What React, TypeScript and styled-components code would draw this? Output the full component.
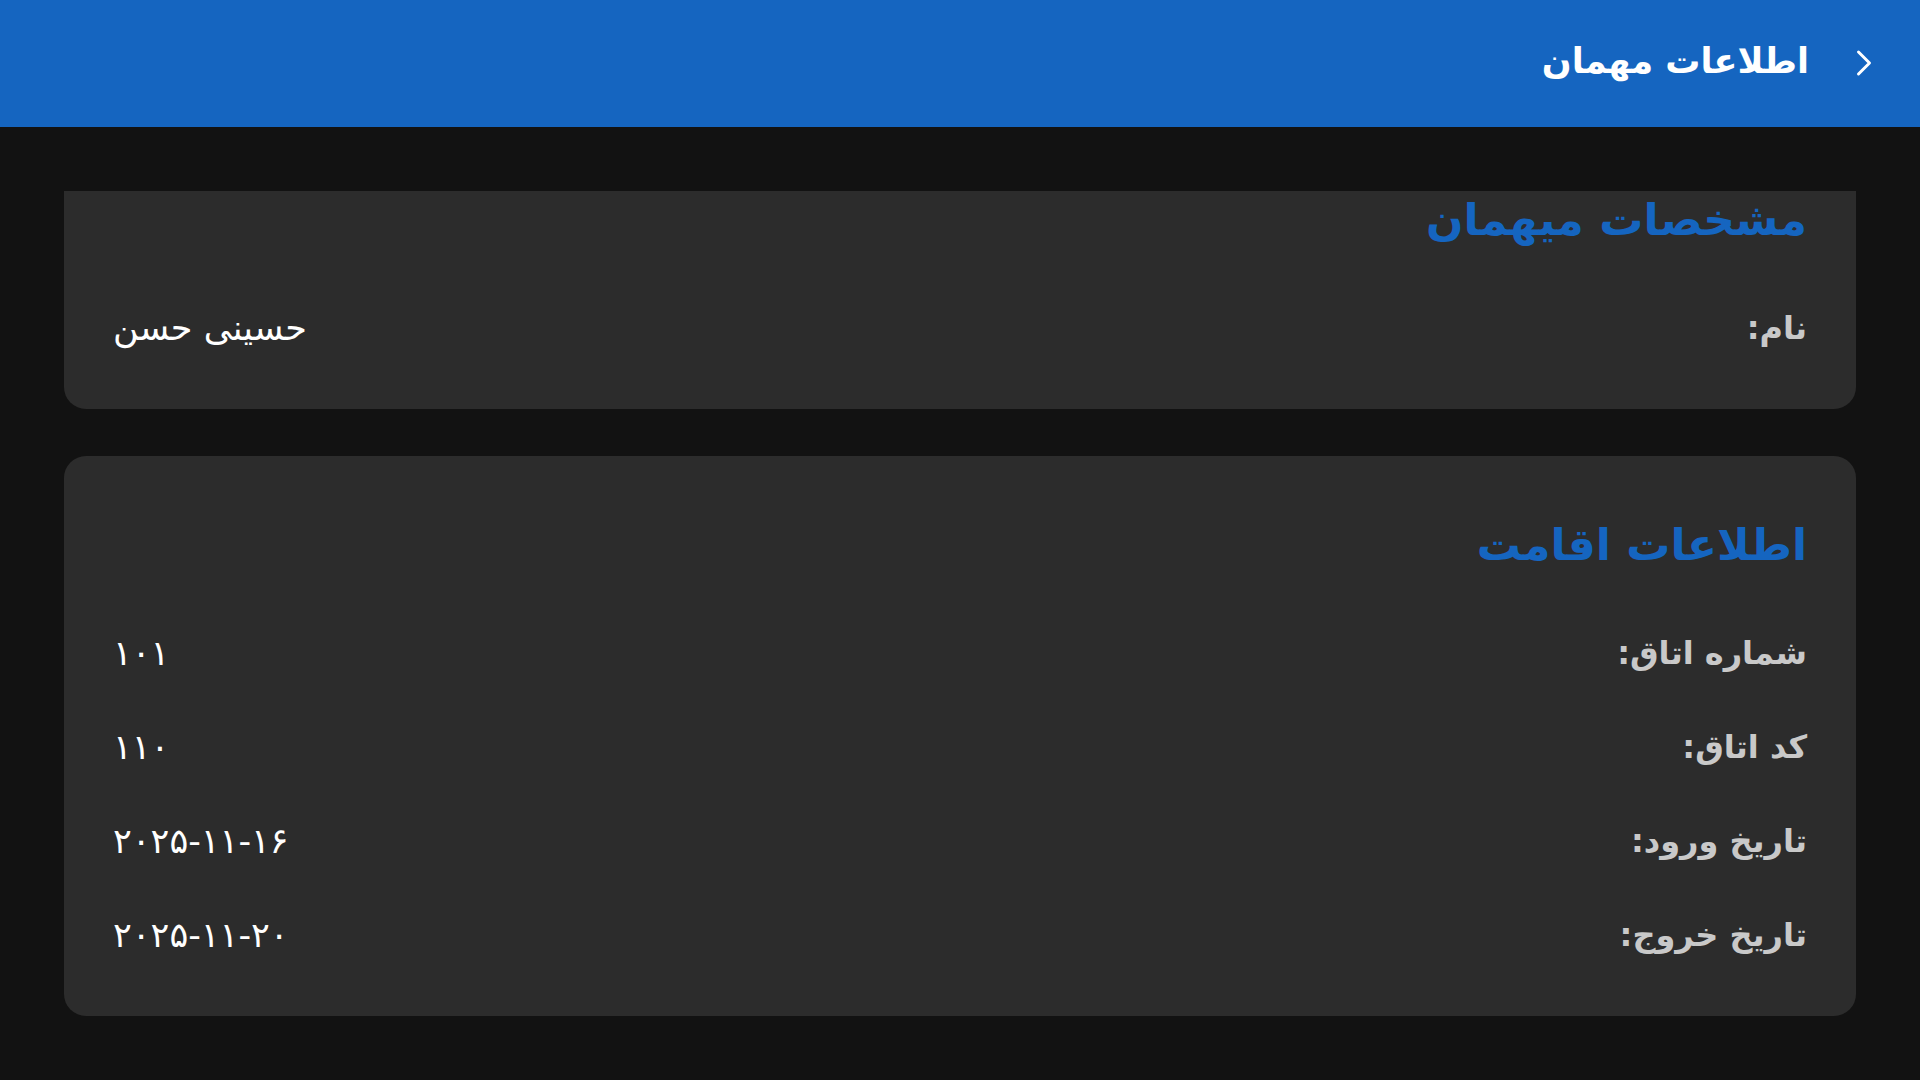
import React from "react";
import styled, { createGlobalStyle } from "styled-components";
import { ChevronRight } from "lucide-react";

const GlobalStyle = createGlobalStyle`
    html, body {
        margin: 0;
        padding: 0;
        background: #121212;
        height: 100%;
    }
    body {
        font-family: "DejaVu Sans", "Noto Sans", sans-serif;
        overflow: hidden;
    }
`;

const Page = styled.div`
    direction: rtl;
    height: 100vh;
    display: flex;
    flex-direction: column;
    background: #121212;
`;

const AppBar = styled.header`
    height: 127px;
    box-sizing: border-box;
    flex-shrink: 0;
    background: #1565c0;
    display: flex;
    align-items: center;
    gap: 33px;
    padding: 0 34px 5px 0;
    color: #ffffff;
`;

const BackButton = styled.button`
    background: none;
    border: none;
    padding: 0;
    color: #ffffff;
    display: flex;
    align-items: center;
    cursor: pointer;
    margin-top: 4px;
`;

const AppTitle = styled.h1`
    margin: 0;
    font-size: 35px;
    font-weight: 700;
`;

// visible part of the scrolled list
const Viewport = styled.main`
    flex: 1;
    margin-top: 64px;
    overflow: hidden;
`;

const Scroller = styled.div`
    margin-top: -60px;
    padding: 0 64px;
    display: flex;
    flex-direction: column;
    gap: 47px;
`;

const Card = styled.section`
    background: #2c2c2c;
    border-radius: 22px;
    padding: 54px 49px 57px;
    display: flex;
    flex-direction: column;
`;

const CardTitle = styled.h2`
    margin: 0 0 50px;
    font-size: 44px;
    line-height: 69px;
    font-weight: 700;
    color: #1565c0;
`;

const Rows = styled.div`
    display: flex;
    flex-direction: column;
    gap: 46px;
`;

const Row = styled.div`
    display: flex;
    justify-content: space-between;
    align-items: center;
    height: 48px;
`;

const Label = styled.span`
    font-size: 32px;
    font-weight: 700;
    color: #c9c9c9;
`;

const Value = styled.span`
    font-size: 35px;
    color: #ffffff;
`;

interface Field {
    label: string;
    value: string;
}

interface Section {
    title: string;
    fields: Field[];
}

const sections: Section[] = [
    {
        title: "مشخصات میهمان",
        fields: [{ label: "نام:", value: "حسینی حسن" }],
    },
    {
        title: "اطلاعات اقامت",
        fields: [
            { label: "شماره اتاق:", value: "۱۰۱" },
            { label: "کد اتاق:", value: "۱۱۰" },
            { label: "تاریخ ورود:", value: "۲۰۲۵-۱۱-۱۶" },
            { label: "تاریخ خروج:", value: "۲۰۲۵-۱۱-۲۰" },
        ],
    },
];

function App() {
    return (
        <>
            <GlobalStyle />
            <Page>
                <AppBar>
                    <BackButton aria-label="back">
                        <ChevronRight size={44} strokeWidth={1.6} />
                    </BackButton>
                    <AppTitle>اطلاعات مهمان</AppTitle>
                </AppBar>
                <Viewport>
                    <Scroller>
                        {sections.map((section) => (
                            <Card key={section.title}>
                                <CardTitle>{section.title}</CardTitle>
                                <Rows>
                                    {section.fields.map((field) => (
                                        <Row key={field.label}>
                                            <Label>{field.label}</Label>
                                            <Value>{field.value}</Value>
                                        </Row>
                                    ))}
                                </Rows>
                            </Card>
                        ))}
                    </Scroller>
                </Viewport>
            </Page>
        </>
    );
}

export default App;
